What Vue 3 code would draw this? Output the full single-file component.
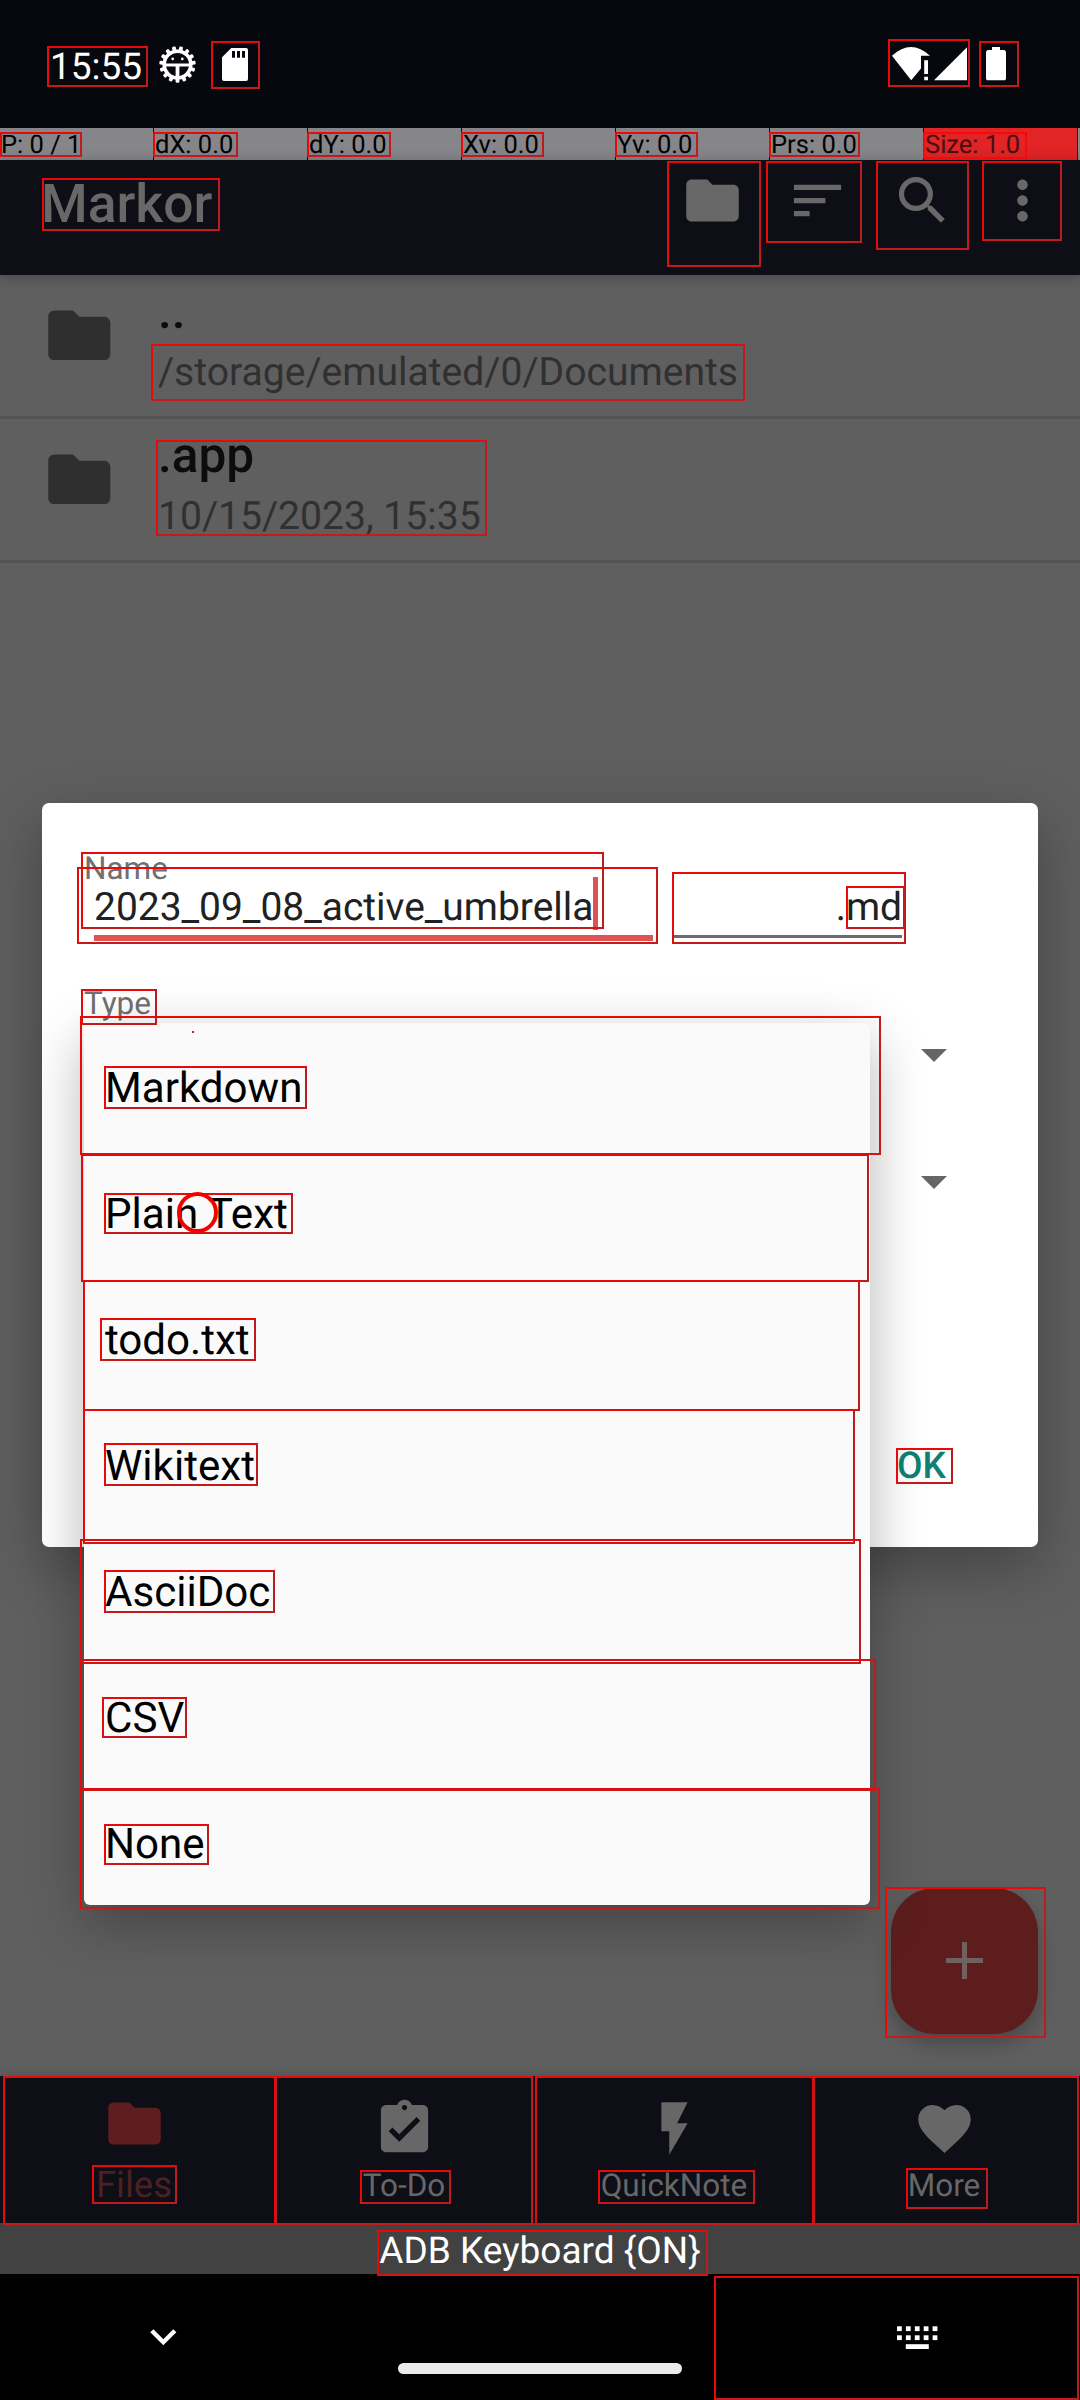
<script setup>
const pointerCells = ['P: 0 / 1', 'dX: 0.0', 'dY: 0.0', 'Xv: 0.0', 'Yv: 0.0', 'Prs: 0.0', 'Size: 1.0']

const files = [
  { name: '..', detail: '/storage/emulated/0/Documents' },
  { name: '.app', detail: '10/15/2023, 15:35' },
]

const types = ['Markdown', 'Plain Text', 'todo.txt', 'Wikitext', 'AsciiDoc', 'CSV', 'None']

const folder = 'M10 4H4c-1.1 0-1.99.9-1.99 2L2 18c0 1.1.9 2 2 2h16c1.1 0 2-.9 2-2V8c0-1.1-.9-2-2-2h-8l-2-2z'

const actions = [
  { id: 'folder', width: 105, path: folder },
  { id: 'sort', width: 105, path: 'M3 18h6v-2H3v2zM3 6v2h18V6H3zm0 7h12v-2H3v2z' },
  { id: 'search', width: 105, path: 'M15.5 14h-.79l-.28-.27C15.41 12.59 16 11.11 16 9.5 16 5.91 13.09 3 9.5 3S3 5.91 3 9.5 5.91 16 9.5 16c1.61 0 3.09-.59 4.23-1.57l.27.28v.79l5 4.99L20.49 19l-4.99-5zm-6 0C7.01 14 5 11.99 5 9.5S7.01 5 9.5 5 14 7.01 14 9.5 11.99 14 9.5 14z' },
  { id: 'overflow', width: 95, path: 'M12 8c1.1 0 2-.9 2-2s-.9-2-2-2-2 .9-2 2 .9 2 2 2zm0 2c-1.1 0-2 .9-2 2s.9 2 2 2 2-.9 2-2-.9-2-2-2zm0 6c-1.1 0-2 .9-2 2s.9 2 2 2 2-.9 2-2-.9-2-2-2z' },
]

const tabs = [
  { label: 'Files', active: true, path: folder },
  { label: 'To-Do', path: 'M19 3h-4.18C14.4 1.84 13.3 1 12 1c-1.3 0-2.4.84-2.82 2H5c-1.1 0-2 .9-2 2v14c0 1.1.9 2 2 2h14c1.1 0 2-.9 2-2V5c0-1.1-.9-2-2-2zm-7 0c.55 0 1 .45 1 1s-.45 1-1 1-1-.45-1-1 .45-1 1-1zm-2 14l-4-4 1.41-1.41L10 14.17l6.59-6.59L18 9l-8 8z' },
  { label: 'QuickNote', path: 'M7 2v11h3v9l7-12h-4l4-8z' },
  { label: 'More', path: 'M12 21.35l-1.45-1.32C5.4 15.36 2 12.28 2 8.5 2 5.42 4.42 3 7.5 3c1.74 0 3.41.81 4.5 2.09C13.09 3.81 14.76 3 16.5 3 19.58 3 22 5.42 22 8.5c0 3.78-3.4 6.86-8.55 11.54L12 21.35z' },
]

const teeth = Array.from({ length: 15 }, (_, i) => i * 24 + 12)

// Bounds overlay: left, top, right, bottom
const bounds = [
  [47, 46, 148, 87], [211, 41, 260, 89], [888, 39, 970, 87], [979, 41, 1019, 87],
  [0, 132, 82, 157], [153, 132, 238, 157], [307, 132, 391, 157], [461, 132, 544, 157],
  [615, 132, 698, 157], [769, 132, 860, 157], [923, 132, 1027, 159, 1],
  [42, 178, 220, 231], [667, 161, 761, 267], [766, 161, 862, 243], [876, 161, 969, 250], [982, 161, 1062, 241],
  [151, 344, 745, 401], [156, 440, 487, 536],
  [81, 852, 604, 929], [77, 867, 658, 944], [672, 872, 906, 944], [846, 886, 905, 929],
  [81, 989, 157, 1025], [896, 1448, 953, 1484],
  [80, 1016, 881, 1155], [81, 1154, 869, 1282], [83, 1280, 860, 1411], [83, 1409, 855, 1544],
  [80, 1539, 861, 1664], [80, 1659, 876, 1791], [80, 1788, 880, 1909],
  [104, 1066, 307, 1109], [104, 1193, 293, 1234], [100, 1318, 256, 1361], [104, 1443, 258, 1486],
  [104, 1570, 275, 1613], [102, 1697, 187, 1738], [104, 1824, 209, 1865],
  [885, 1887, 1046, 2038],
  [3, 2076, 277, 2225], [274, 2076, 533, 2225], [535, 2076, 815, 2225], [812, 2076, 1079, 2225],
  [92, 2165, 177, 2204], [360, 2170, 451, 2204], [598, 2170, 755, 2204], [906, 2168, 988, 2209],
  [377, 2230, 708, 2276], [714, 2276, 1079, 2400],
].map(([l, t, r, b, bright]) => ({
  bright: !!bright,
  style: { left: l + 'px', top: t + 'px', width: r - l + 'px', height: b - t + 'px' },
}))
</script>

<template>
  <div class="screen">
    <header class="status">
      <span class="time">15:55</span>
      <svg class="bug" viewBox="-18.5 -18.5 37 37">
        <rect v-for="a in teeth" :key="a" x="-1.9" y="-18.2" width="3.8" height="6" rx="1.2" fill="#fff" :transform="`rotate(${a})`" />
        <circle r="13.3" fill="none" stroke="#fff" stroke-width="3.6" />
        <path d="M-12 -.9H12V2H1.9V13H-1.9V2H-12z" fill="#fff" />
        <circle cx="-4.8" cy="-5.6" r="1.3" fill="#fff" />
        <circle cx="4.8" cy="-5.6" r="1.3" fill="#fff" />
      </svg>
      <svg class="sd" viewBox="0 0 26 33">
        <path fill="#fff" fill-rule="evenodd" d="M9.3 0H24a2 2 0 0 1 2 2V31a2 2 0 0 1-2 2H2a2 2 0 0 1-2-2V9.3zM10 3V9.7H13V3zM15 3V9.7H18V3zM20 3V9.7H23V3z" />
      </svg>
      <div class="gap"></div>
      <svg class="net" viewBox="0 0 76 34">
        <path fill="#fff" d="M0 8.8Q19-8.8 38 8.8H29V21.6L19.2 33.3z" />
        <path fill="#fff" d="M32.2 13.3H36V27H32.2zM32.2 29.8H36V33.3H32.2z" />
        <path fill="#fff" d="M75 .3V33.3H42z" />
      </svg>
      <svg class="bat" viewBox="0 0 20 34"><path fill="#fff" d="M6 0H14V3H18.5L20 4.5V32L19 33.2H1L0 32V4.5L1.5 3H6z" /></svg>
    </header>

    <div class="pointer">
      <div v-for="(c, i) in pointerCells" :key="c" class="cell" :class="{ hot: i === 6 }">{{ c }}</div>
      <div class="cell rest"></div>
    </div>

    <div class="appbar">
      <h1 class="title">Markor</h1>
      <div v-for="a in actions" :key="a.id" class="action" :style="{ width: a.width + 'px' }">
        <svg class="ic" viewBox="0 0 24 24"><path fill="#686868" :d="a.path" /></svg>
      </div>
    </div>

    <main class="list">
      <div v-for="f in files" :key="f.name" class="row">
        <svg class="fold" viewBox="0 0 24 24"><path fill="#2f2f2f" :d="folder" /></svg>
        <div class="meta">
          <div class="fname">{{ f.name }}</div>
          <div class="detail">{{ f.detail }}</div>
        </div>
      </div>
    </main>

    <nav class="tabs">
      <div v-for="t in tabs" :key="t.label" class="tab" :class="{ active: t.active }">
        <svg class="ic" viewBox="0 0 24 24"><path fill="currentColor" :d="t.path" /></svg>
        <span class="tlabel">{{ t.label }}</span>
      </div>
    </nav>

    <div class="adb">ADB Keyboard {ON}</div>

    <footer class="sysnav">
      <svg class="chev" viewBox="0 0 27 17"><path d="M1.8 1.8L13.3 13.2L24.8 1.8" fill="none" stroke="#fff" stroke-width="4.4" /></svg>
      <div class="pill"></div>
      <svg class="kbd" viewBox="0 0 41 24">
        <g fill="#fff">
          <rect v-for="i in 10" :key="i" :x="((i - 1) % 5) * 8.9" :y="i > 5 ? 9.3 : 0.3" width="4.8" height="4.8" />
          <rect x="8.8" y="18.2" width="23" height="4.8" />
        </g>
      </svg>
    </footer>

    <button class="fab">
      <svg viewBox="0 0 37 37"><path d="M16 0h5v16h16v5H21v16h-5V21H0v-5h16z" fill="#716060" /></svg>
    </button>

    <section class="dialog">
      <div class="label first">Name</div>
      <div class="fields">
        <div class="input"><span>2023_09_08_active_umbrella</span><i class="caret"></i></div>
        <div class="input ext">.md</div>
      </div>
      <div class="label">Type</div>
      <div class="spinners">
        <svg viewBox="0 0 26 13"><path d="M0 0H26L13 13z" fill="#666" /></svg>
        <svg viewBox="0 0 26 13"><path d="M0 0H26L13 13z" fill="#666" /></svg>
      </div>
      <div class="ok">OK</div>
    </section>

    <ul class="menu">
      <li v-for="t in types" :key="t">{{ t }}</li>
    </ul>

    <div v-for="(b, i) in bounds" :key="i" class="bound" :class="{ bright: b.bright }" :style="b.style"></div>
    <div class="touch"></div>
    <div class="dot"></div>
  </div>
</template>

<style>
body {
  margin: 0;
  background: #5f5f5f;
}
</style>

<style scoped>
.screen {
  position: relative;
  width: 1080px;
  height: 2400px;
  display: flex;
  flex-direction: column;
  overflow: hidden;
  background: #5f5f5f;
  font-family: Roboto, "Liberation Sans", sans-serif;
  text-rendering: geometricPrecision;
}
svg { display: block; flex: none; }
.status {
  box-sizing: border-box;
  height: 128px;
  padding: 0 74px 0 50px;
  display: flex;
  align-items: center;
  background: #07080d;
}
.time {
  width: 109px;
  font-size: 37px;
  line-height: 44px;
  padding-top: 7px;
  color: #fff;
}
.bug { width: 37px; height: 37px; margin-top: 1px; }
.sd { width: 26px; height: 33px; margin: 1px 0 0 26px; }
.gap { flex: 1; }
.net { width: 76px; height: 34px; margin-right: 18px; }
.bat { width: 20px; height: 34px; }
.pointer {
  height: 32px;
  display: flex;
  gap: 1px;
  background: #0d0e16;
}
.cell {
  box-sizing: border-box;
  width: 153px;
  height: 32px;
  flex: none;
  padding-left: 1px;
  font-size: 25.5px;
  line-height: 34px;
  color: #000;
  background: #868589;
}
.cell.hot { background: #e12426; color: #4a0f10; }
.cell.rest { flex: 1; width: auto; padding: 0; }
.appbar {
  position: relative;
  box-sizing: border-box;
  height: 115px;
  padding: 0 10px 34px 41px;
  display: flex;
  align-items: center;
  background: #0d0e16;
  box-shadow: 0 2px 12px rgba(0, 0, 0, 0.28);
}
.title {
  flex: 1;
  margin: 0;
  padding-top: 9px;
  font-size: 53.4px;
  line-height: 62px;
  font-weight: 500;
  color: #686868;
}
.action { display: flex; justify-content: center; }
.ic { width: 63px; height: 63px; }
.list { flex: 1; }
.row {
  box-sizing: border-box;
  height: 144px;
  display: flex;
  padding: 0 0 0 42px;
  border-bottom: 3px solid #535353;
}
.fold { width: 74.5px; height: 74.5px; margin-top: 23px; }
.meta { padding: 25px 0 0 41.5px; }
.fname {
  height: 40px;
  font-size: 49.5px;
  line-height: 25px;
  font-weight: 500;
  color: #0c0c0c;
}
.detail {
  font-size: 39.1px;
  line-height: 64px;
  color: #303030;
}
.tabs {
  height: 147px;
  display: flex;
  background: #0d0e16;
  box-shadow: 0 -1px 10px rgba(0, 0, 0, 0.15);
}
.tab {
  box-sizing: border-box;
  width: 270px;
  padding: 21px 2px 0 0;
  display: flex;
  flex-direction: column;
  align-items: center;
  color: #676767;
}
.tab.active { padding-top: 16px; color: #5e1e20; }
.tlabel { font-size: 31.5px; line-height: 38px; margin-top: 7px; }
.active .tlabel { font-size: 36.5px; line-height: 44px; margin-top: 8px; color: #4d2023; }
.adb {
  height: 51px;
  line-height: 57px;
  text-align: center;
  font-size: 37px;
  color: #fff;
  background: #424242;
}
.sysnav {
  height: 126px;
  display: flex;
  align-items: flex-start;
  background: #000;
}
.chev { width: 27px; height: 17px; margin: 55px 0 0 150px; }
.pill { width: 284px; height: 11px; margin: 89px 0 0 221px; border-radius: 6px; background: #ebebeb; }
.kbd { width: 41px; height: 24px; margin: 52px 0 0 215px; }
.fab {
  position: absolute;
  left: 891px;
  top: 1888px;
  width: 147px;
  height: 146px;
  padding: 0;
  border: 0;
  border-radius: 44px;
  display: flex;
  align-items: center;
  justify-content: center;
  background: #5d1d1d;
  box-shadow: 0 10px 20px rgba(0, 0, 0, 0.25);
}
.fab svg { width: 37px; height: 37px; margin-top: -1px; }
.dialog {
  position: absolute;
  box-sizing: border-box;
  left: 42px;
  top: 803px;
  width: 996px;
  height: 744px;
  padding: 45px 0 0 42px;
  border-radius: 7px;
  background: #fff;
  box-shadow: 0 20px 60px rgba(0, 0, 0, 0.3);
}
.label {
  font-size: 31.5px;
  line-height: 42px;
  color: #707070;
}
.fields { display: flex; gap: 19px; padding-left: 10px; margin-top: -1px; }
.input {
  box-sizing: border-box;
  width: 559px;
  height: 52px;
  display: flex;
  border-bottom: 6px solid #e05353;
  font-size: 38.95px;
  line-height: 36px;
  color: #212121;
}
.input.ext {
  width: 230px;
  height: 49px;
  justify-content: flex-end;
  border-bottom: 3px solid #6b6b6b;
}
.caret { width: 5px; height: 53px; margin-top: -12px; background: #e05353; }
.fields + .label { margin-top: 42px; }
.spinners {
  display: flex;
  flex-direction: column;
  gap: 114px;
  padding: 24px 0 0 836.5px;
}
.spinners svg { width: 26px; height: 13px; }
.ok {
  margin-top: 256px;
  padding-left: 813px;
  font-size: 37px;
  line-height: 44px;
  font-weight: 500;
  color: #0f8073;
}
.menu {
  position: absolute;
  box-sizing: border-box;
  left: 84px;
  top: 1023px;
  width: 786px;
  height: 882px;
  margin: 0;
  padding: 2px 0 0 21px;
  list-style: none;
  border-radius: 6px;
  background: #fafafa;
  box-shadow: 0 18px 56px rgba(0, 0, 0, 0.3);
}
.menu li { height: 126px; line-height: 127px; font-size: 42.1px; color: #000; }
.bound {
  position: absolute;
  box-sizing: border-box;
  border: 2px solid;
  border-color: #e80a0a #bc1c1f #c41a1c #e80a0a;
}
.bound.bright { border-color: #f80808; }
.touch {
  position: absolute;
  box-sizing: border-box;
  left: 177px;
  top: 1192px;
  width: 41px;
  height: 41px;
  border: 4px solid #f50000;
  border-radius: 50%;
}
.dot { position: absolute; left: 192px; top: 1031px; width: 2px; height: 2px; background: #a03030; }
</style>
